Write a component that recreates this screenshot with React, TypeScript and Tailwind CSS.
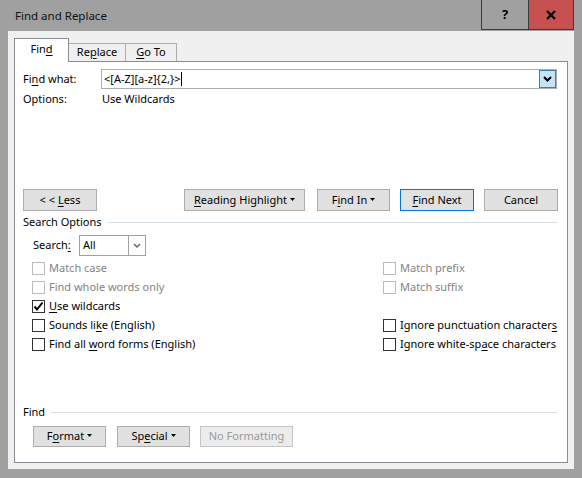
import React from 'react'
import clsx from 'clsx'

const U: React.FC<{ children: React.ReactNode }> = ({ children }) => (
  <span className="underline decoration-1 underline-offset-[2px]">{children}</span>
)

const Caret: React.FC<{ color?: string }> = ({ color = '#000' }) => (
  <svg width="5" height="3" viewBox="0 0 5 3" className="ml-[3px] shrink-0">
    <path d="M0 0H5L2.5 3Z" fill={color} />
  </svg>
)

type BtnProps = {
  className?: string
  children: React.ReactNode
  primary?: boolean
  disabled?: boolean
  caret?: boolean
}

const Btn: React.FC<BtnProps> = ({ className, children, primary, disabled, caret }) => (
  <div
    className={clsx(
      'flex items-center justify-center border leading-none pb-[2px]',
      disabled
        ? 'border-[#c6c6c6] bg-[#ececec] text-[#9a9a9a]'
        : primary
          ? 'border-[#0078d7] bg-[#e1e1e1] text-black'
          : 'border-[#adadad] bg-[#e1e1e1] text-black',
      className,
    )}
  >
    <span className="whitespace-pre">{children}</span>
    {caret && <Caret />}
  </div>
)

const Check: React.FC<{ checked?: boolean; disabled?: boolean; children: React.ReactNode }> = ({
  checked,
  disabled,
  children,
}) => (
  <div className="flex items-center h-[19px]">
    <div
      className={clsx(
        'w-[13px] h-[13px] border bg-white flex items-center justify-center mr-[4px] shrink-0',
        disabled ? 'border-[#bcbcbc]' : 'border-[#333333]',
      )}
    >
      {checked && (
        <svg width="11" height="11" viewBox="0 0 11 11">
          <path d="M1.5 5.5L4 8.5L9.5 1.5" stroke="#000" strokeWidth="2" fill="none" />
        </svg>
      )}
    </div>
    <span className={clsx('whitespace-nowrap', disabled ? 'text-[#838383]' : 'text-black')}>{children}</span>
  </div>
)

const CheckRow: React.FC<{ left?: React.ReactNode; right?: React.ReactNode }> = ({ left, right }) => (
  <div className="flex h-[19px]">
    <div className="w-[368px] shrink-0 pl-[17px]">{left}</div>
    <div>{right}</div>
  </div>
)

const GroupTitle: React.FC<{ children: React.ReactNode }> = ({ children }) => (
  <div className="flex items-center h-[16px] pl-[8px] pr-[10px]">
    <span className="text-black whitespace-nowrap">{children}</span>
    <div className="flex-1 h-px bg-[#d5dfe5] ml-[6px]" />
  </div>
)

export default function App() {
  return (
    <div className="w-[582px] h-[478px] bg-[#a0a0a0] flex flex-col font-['Noto_Sans',sans-serif] text-[11px] text-black select-none overflow-hidden">
      {/* title bar */}
      <div className="h-[31px] flex shrink-0">
        <div className="flex-1 flex items-center pl-[15px] text-[11.5px] text-[#111]">Find and Replace</div>
        <div className="w-[47px] h-[30px] border-l border-b border-[#3c3c3c] flex items-center justify-center font-bold text-[13px]">
          ?
        </div>
        <div className="w-[46px] h-[30px] border-l border-b border-r border-[#3c3c3c] bg-[#c75050] flex items-center justify-center">
          <svg width="10" height="10" viewBox="0 0 10 10">
            <path d="M1 1L9 9M9 1L1 9" stroke="#000" strokeWidth="2.2" />
          </svg>
        </div>
        <div className="w-[8px]" />
      </div>

      {/* body */}
      <div className="mx-[8px] h-[438px] bg-[#f0f0f0] pt-[7px] pl-[6px] pr-[6px] flex flex-col">
        {/* tabs */}
        <div className="flex items-end h-[23px]">
          <div className="relative z-10 -mb-px h-[24px] w-[55px] bg-white border-t border-l border-r border-[#898c95] flex items-center justify-center pb-[3px]">
            <span>
              Fin<U>d</U>
            </span>
          </div>
          <div className="h-[18px] w-[57px] bg-[#f0f0f0] border-t border-r border-[#adadad] flex items-center justify-center pb-px">
            <span>
              Re<U>p</U>lace
            </span>
          </div>
          <div className="h-[18px] w-[51px] bg-[#f0f0f0] border-t border-r border-[#adadad] flex items-center justify-center pb-px">
            <span>
              <U>G</U>o To
            </span>
          </div>
        </div>

        {/* tab panel */}
        <div className="h-[402px] bg-white border border-[#898c95] flex flex-col">
          <div className="mt-[7px] h-[20px] flex items-center">
            <div className="w-[86px] pl-[8px] whitespace-nowrap">
              Fi<U>n</U>d what:
            </div>
            <div className="flex-1 mr-[10px] h-[20px] border border-[#abadb3] flex items-center">
              <span className="pl-[2px] whitespace-nowrap">&lt;[A-Z][a-z]{'{2,}'}&gt;</span>
              <span className="w-px h-[14px] bg-black ml-[1px]" />
              <div className="flex-1" />
              <div className="w-[17px] h-[18px] border border-[#3c7fb1] bg-[#c4e5f6] flex items-center justify-center">
                <svg width="9" height="6" viewBox="0 0 9 6">
                  <path d="M1 1L4.5 4.5L8 1" stroke="#000" strokeWidth="2" fill="none" />
                </svg>
              </div>
            </div>
          </div>

          <div className="mt-[2px] h-[16px] flex items-center">
            <div className="w-[86px] pl-[8px]">Options:</div>
            <div className="pl-px">Use Wildcards</div>
          </div>

          <div className="mt-[82px] h-[22px] flex pl-[8px]">
            <Btn className="w-[74px]">
              {'< < '}
              <U>L</U>ess
            </Btn>
            <Btn className="w-[121px] ml-[87px]" caret>
              <U>R</U>eading Highlight
            </Btn>
            <Btn className="w-[73px] ml-[12px]" caret>
              F<U>i</U>nd In
            </Btn>
            <Btn className="w-[74px] ml-[10px]" primary>
              <U>F</U>ind Next
            </Btn>
            <Btn className="w-[74px] ml-[10px]">Cancel</Btn>
          </div>

          <div className="mt-[3px]">
            <GroupTitle>Search Options</GroupTitle>
          </div>

          <div className="mt-[5px] h-[21px] flex items-center pl-[18px]">
            <div className="w-[46px]">
              Search<U>:</U>
            </div>
            <div className="w-[67px] h-[21px] border border-[#a0a0a0] flex items-center">
              <span className="pl-[3px] flex-1">All</span>
              <div className="w-[17px] h-[19px] border-l border-[#a0a0a0] flex items-center justify-center">
                <svg width="8" height="5" viewBox="0 0 8 5">
                  <path d="M1 1L4 4L7 1" stroke="#606060" strokeWidth="1.4" fill="none" />
                </svg>
              </div>
            </div>
          </div>

          <div className="mt-[3px] flex flex-col">
            <CheckRow
              left={<Check disabled>Match case</Check>}
              right={<Check disabled>Match prefix</Check>}
            />
            <CheckRow
              left={<Check disabled>Find whole words only</Check>}
              right={<Check disabled>Match suffix</Check>}
            />
            <CheckRow
              left={
                <Check checked>
                  <U>U</U>se wildcards
                </Check>
              }
            />
            <CheckRow
              left={
                <Check>
                  Sounds li<U>k</U>e (English)
                </Check>
              }
              right={
                <Check>
                  Ignore punctuation character<U>s</U>
                </Check>
              }
            />
            <CheckRow
              left={
                <Check>
                  Find all <U>w</U>ord forms (English)
                </Check>
              }
              right={
                <Check>
                  Ignore white-sp<U>a</U>ce characters
                </Check>
              }
            />
          </div>

          <div className="mt-[50px]">
            <GroupTitle>Find</GroupTitle>
          </div>

          <div className="mt-[6px] h-[21px] flex pl-[18px]">
            <Btn className="w-[73px]" caret>
              F<U>o</U>rmat
            </Btn>
            <Btn className="w-[73px] ml-[11px]" caret>
              Sp<U>e</U>cial
            </Btn>
            <Btn className="w-[93px] ml-[10px]" disabled>
              No Formatting
            </Btn>
          </div>
        </div>
      </div>
      <div className="mx-[8px] h-px bg-[#9aa3b0]" />
    </div>
  )
}
